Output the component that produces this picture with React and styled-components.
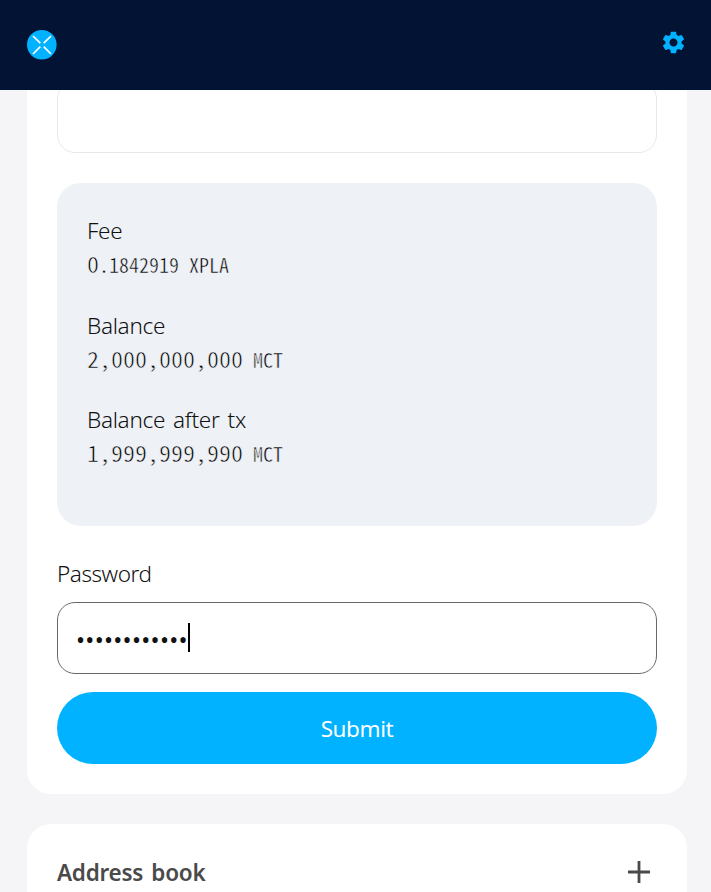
import React from "react";
import styled, { createGlobalStyle } from "styled-components";
import { MdSettings } from "react-icons/md";

const GlobalStyle = createGlobalStyle`
  * { box-sizing: border-box; }
  body {
    margin: 0;
    background: #f5f5f8;
    color: #111;
    font-family: "Noto Sans", "Noto Sans CJK KR", sans-serif;
    overflow: hidden;
  }
`;

const Page = styled.div`
  height: 892px;
  display: flex;
  flex-direction: column;
  overflow: hidden;
`;

const Header = styled.header`
  flex: none;
  height: 90px;
  padding: 0 24px 0 27px;
  display: flex;
  justify-content: space-between;
  align-items: center;
  background: #021333;
`;

const Logo = styled.svg`
  display: block;
  width: 30px;
  height: 30px;
`;

const SettingsButton = styled.button`
  display: flex;
  padding: 0;
  margin-bottom: 5px;
  border: 0;
  background: none;
  color: #00b2ff;
  font-size: 27px;
`;

const Main = styled.main`
  flex: 1;
  min-height: 0;
  padding: 0 24px 0 27px;
  display: flex;
  flex-direction: column;
  gap: 30px;
  overflow: hidden;
`;

const Card = styled.section`
  flex: none;
  padding: 30px;
  border-radius: ${(p) => (p.$scrolled ? "0 0 24px 24px" : "24px")};
  background: #fff;
`;

const FormCard = styled(Card)`
  padding-top: 0;
`;

const Scrolled = styled.div`
  height: 63px;
  display: flex;
  flex-direction: column;
  justify-content: flex-end;
  overflow: hidden;
`;

const Field = styled.div`
  flex: none;
  height: 72px;
  padding: 0 19px 0 18px;
  display: flex;
  align-items: center;
  border: 1px solid ${(p) => (p.$focused ? "#696969" : "#e8e8e8")};
  border-radius: 18px;
  background: #fff;
`;

const Summary = styled.dl`
  height: 343px;
  margin: 30px 0;
  padding: 30px;
  border-radius: 24px;
  background: #eef1f6;
`;

const SummaryItem = styled.div`
  height: 94.5px;
`;

const Term = styled.dt`
  height: 33px;
  font-size: 22.5px;
  font-weight: 360;
  line-height: 36px;
  letter-spacing: -0.3px;
  word-spacing: 2.5px;
`;

const Amount = styled.dd`
  margin: 0;
  height: 34px;
  display: flex;
  align-items: baseline;
  font-family: "Noto Sans Mono CJK KR", "Liberation Mono", monospace;
  line-height: 34px;
  white-space: pre;
  color: #000;
  -webkit-text-stroke: 0.65px #eef1f6;
`;

const Whole = styled.span`
  font-size: 24px;
  transform: scaleY(0.9);
  transform-origin: 0 75%;
`;

const Small = styled.span`
  font-size: 20px;
  -webkit-text-stroke-width: 0.5px;
`;

const Label = styled.div`
  height: 36px;
  margin-bottom: 10px;
  font-size: 22.5px;
  font-weight: 360;
  line-height: 36px;
  letter-spacing: -0.45px;
`;

const Dots = styled.span`
  margin-top: 3px;
  font-size: 24px;
  line-height: 30px;
  letter-spacing: 0.3px;
`;

const Caret = styled.span`
  width: 2px;
  height: 29px;
  margin-bottom: 1px;
  background: #000;
`;

const Submit = styled.button`
  display: block;
  width: 100%;
  height: 72px;
  margin-top: 18px;
  padding: 0;
  border: 0;
  border-radius: 36px;
  background: #00b2ff;
  color: #fff;
  font-family: inherit;
  font-size: 22.5px;
  font-weight: 400;
  letter-spacing: -0.4px;
`;

const AddressHeader = styled.div`
  height: 36px;
  display: flex;
  align-items: center;
  justify-content: space-between;
  color: #4a4a4a;
`;

const AddressTitle = styled.h2`
  margin: 2px 0 0;
  font-size: 22.5px;
  font-weight: 600;
  line-height: 36px;
  letter-spacing: -0.25px;
  word-spacing: 2.5px;
`;

const Plus = styled.svg`
  display: block;
  width: 22px;
  height: 22px;
  margin-right: 7px;
`;

const items = [
  { label: "Fee", whole: "0", rest: ".1842919 XPLA" },
  { label: "Balance", whole: "2,000,000,000", rest: " MCT" },
  { label: "Balance after tx", whole: "1,999,999,990", rest: " MCT" },
];

export default function App() {
  return (
    <Page>
      <GlobalStyle />
      <Header>
        <Logo viewBox="0 0 30 30" aria-label="XPLA">
          <circle cx="14.8" cy="14.8" r="14.8" fill="#00b2ff" />
          <path
            d="M6 6 13.3 13.2M24 6 16.7 13.2M6 24 13.3 16.7M24 24 16.7 16.7"
            stroke="#fff"
            strokeWidth="1.7"
          />
        </Logo>
        <SettingsButton aria-label="Settings">
          <MdSettings />
        </SettingsButton>
      </Header>
      <Main>
        <FormCard $scrolled>
          <Scrolled>
            <Field />
          </Scrolled>
          <Summary>
            {items.map((item) => (
              <SummaryItem key={item.label}>
                <Term>{item.label}</Term>
                <Amount>
                  <Whole>{item.whole}</Whole>
                  <Small>{item.rest}</Small>
                </Amount>
              </SummaryItem>
            ))}
          </Summary>
          <Label>Password</Label>
          <Field $focused>
            <Dots>••••••••••••</Dots>
            <Caret />
          </Field>
          <Submit>Submit</Submit>
        </FormCard>
        <Card>
          <AddressHeader>
            <AddressTitle>Address book</AddressTitle>
            <Plus viewBox="0 0 22 22">
              <path d="M0 11H22M11 0V22" stroke="currentColor" strokeWidth="2.8" />
            </Plus>
          </AddressHeader>
        </Card>
      </Main>
    </Page>
  );
}
